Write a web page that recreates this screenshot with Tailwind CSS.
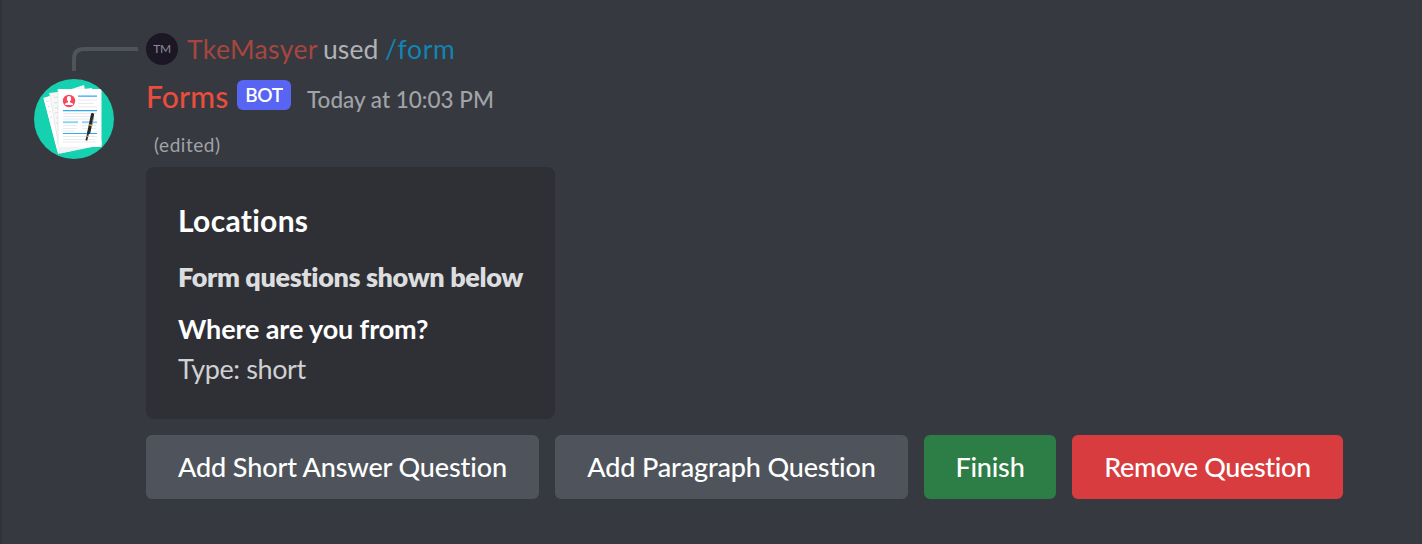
<!DOCTYPE html>
<html lang="en">
<head>
<meta charset="utf-8">
<title>Forms</title>
<script src="https://cdn.jsdelivr.net/npm/@tailwindcss/browser@4"></script>
</head>
<body class="bg-[#36393f] font-['Lato','Noto_Sans',sans-serif] [font-variant-ligatures:none]">
<main class="h-[544px] w-[1422px] overflow-hidden border-l-2 border-[#313338] pt-[33px] whitespace-nowrap">
  <!-- Command reply line -->
  <div class="flex h-8 items-center">
    <svg class="h-8 w-[144px] shrink-0" viewBox="0 0 144 32" fill="none" overflow="visible"><path d="M72 38V26Q72 16 82 16H136" stroke="#4f545c" stroke-width="4"/></svg>
    <div class="flex size-8 shrink-0 items-center justify-center rounded-full bg-[#1b1725] text-[12px] leading-none tracking-[-0.3px] text-[#8d8b96]">TM</div>
    <div class="ml-[9px] flex text-[26.5px] leading-8">
      <span class="w-[136px] tracking-[0.4px] text-[#a6463f]">TkeMasyer</span>
      <span class="w-[62px] tracking-[0.1px] text-[#b0b2b5]">used</span>
      <span class="tracking-[0.7px] text-[#1283b4]">/form</span>
    </div>
  </div>

  <div class="flex">
    <div class="w-[144px] shrink-0 pt-[14px] pl-8">
      <svg class="size-20" viewBox="0 0 80 80">
        <defs><clipPath id="face"><circle cx="40" cy="40" r="40"/></clipPath></defs>
        <g clip-path="url(#face)">
          <rect width="80" height="80" fill="#16d1b0"/>
          <path d="M9.500 19L50 6L62 60L24 75Z" fill="#f4f5f6"/>
          <path d="M9.500 19L24 15L29 70L23.500 72Z" fill="#fff"/>
          <path d="M15.500 14L58 9L68 66L26 74.500Z" fill="#f7f7f8"/>
          <path d="M12 22.500l3-.8M14 27.500l2-.4M15 33l2-.4M16 38.500l2-.4M20 18.500l4-.6M20 24l4-.4M21 29l3-.3M21 34l3-.3M22 39l2-.2M22 44l2-.2" stroke="#dadde0" stroke-width="1"/>
          <path d="M15.500 14L26 74" stroke="#e2e4e7" stroke-width=".8"/>
          <path d="M24 10V66L26 74.500L58 67.500" fill="#f2f3f4"/>
          <rect x="24" y="10" width="43.500" height="58" fill="#fff"/>
          <path d="M24 10V67.500" stroke="#e1e4e7" stroke-width=".8"/>
          <circle cx="35" cy="22" r="6.200" fill="#f9485b"/>
          <ellipse cx="35" cy="19.800" rx="2.100" ry="2.700" fill="#fff"/>
          <path d="M34 21.500h2v2q3.200.2 3.200 2.400h-8.400q0-2.200 3.200-2.400Z" fill="#fff"/>
          <path d="M44 17.200H63M29 31.700H63M29 54.500H63" stroke="#36a9e8" stroke-width="1.200"/>
          <path d="M29 43.200H44M48 43.200H63" stroke="#8ed5f5" stroke-width="2"/>
          <path d="M44 21H63M44 24.500H60M44 27.800H63M29 34.500H63M29 37.500H61M29 40H63M29 46.500H43M29 49.500H43M29 52H41M48 46.500H62M48 49.500H62M29 57.500H63M29 60.500H61M29 63H62" stroke="#e3e6e8" stroke-width=".8"/>
          <path d="M58.500 35.500L54.800 53.500" stroke="#26272b" stroke-width="3.200" stroke-linecap="round"/>
          <path d="M55 51L52.300 61.500" stroke="#2d2e33" stroke-width="1.800"/>
          <path d="M59.600 38L57.900 46" stroke="#8b8d91" stroke-width=".8"/>
          <path d="M55 45.900l3.500.8M52.600 57l1.800.5" stroke="#e8b83c" stroke-width="1.200"/>
        </g>
      </svg>
    </div>

    <div class="pt-[9px]">
      <div class="flex h-11 items-baseline">
        <span class="w-[91px] text-[30px] leading-[44px] font-medium tracking-[0.2px] text-[#ea4d3d]">Forms</span>
        <span class="mt-[6px] flex h-[30px] w-[54px] items-center justify-center self-start rounded-[6px] bg-[#5865f2] text-[19px] leading-[30px] font-semibold tracking-[-0.3px] text-white">BOT</span>
        <span class="ml-4 text-[22.5px] font-medium text-[#a0a3a7]">Today at 10:03 PM</span>
      </div>
      <div class="flex h-[49px] items-center pt-[6px] pl-2 text-[19px] tracking-[0.55px] text-[#a0a3a7]">(edited)</div>

      <section class="h-[252px] w-[409px] rounded-lg bg-[#2f3035] px-8 pt-[33px]">
        <h1 class="text-[30px] leading-10 font-bold tracking-[0.3px] text-white">Locations</h1>
        <p class="mt-[19px] text-[27px] leading-9 font-extrabold tracking-[-0.38px] text-[#dcddde]">Form questions shown below</p>
        <h2 class="mt-4 text-[27px] leading-9 font-bold tracking-[-0.12px] text-white">Where are you from?</h2>
        <p class="mt-1 text-[27px] leading-9 tracking-[-0.4px] text-[#d0d1d3]">Type: short</p>
      </section>

      <div class="mt-4 flex gap-4 text-[27px] font-medium text-white">
        <button class="h-16 w-[393px] rounded-[6px] bg-[#4f545c] tracking-[-0.12px]">Add Short Answer Question</button>
        <button class="h-16 w-[353px] rounded-[6px] bg-[#4f545c] tracking-[-0.15px]">Add Paragraph Question</button>
        <button class="h-16 w-[132px] rounded-[6px] bg-[#2d7d46] tracking-[-0.2px]">Finish</button>
        <button class="h-16 w-[271px] rounded-[6px] bg-[#d83c3e] tracking-[-0.35px]">Remove Question</button>
      </div>
    </div>
  </div>
</main>
</body>
</html>
